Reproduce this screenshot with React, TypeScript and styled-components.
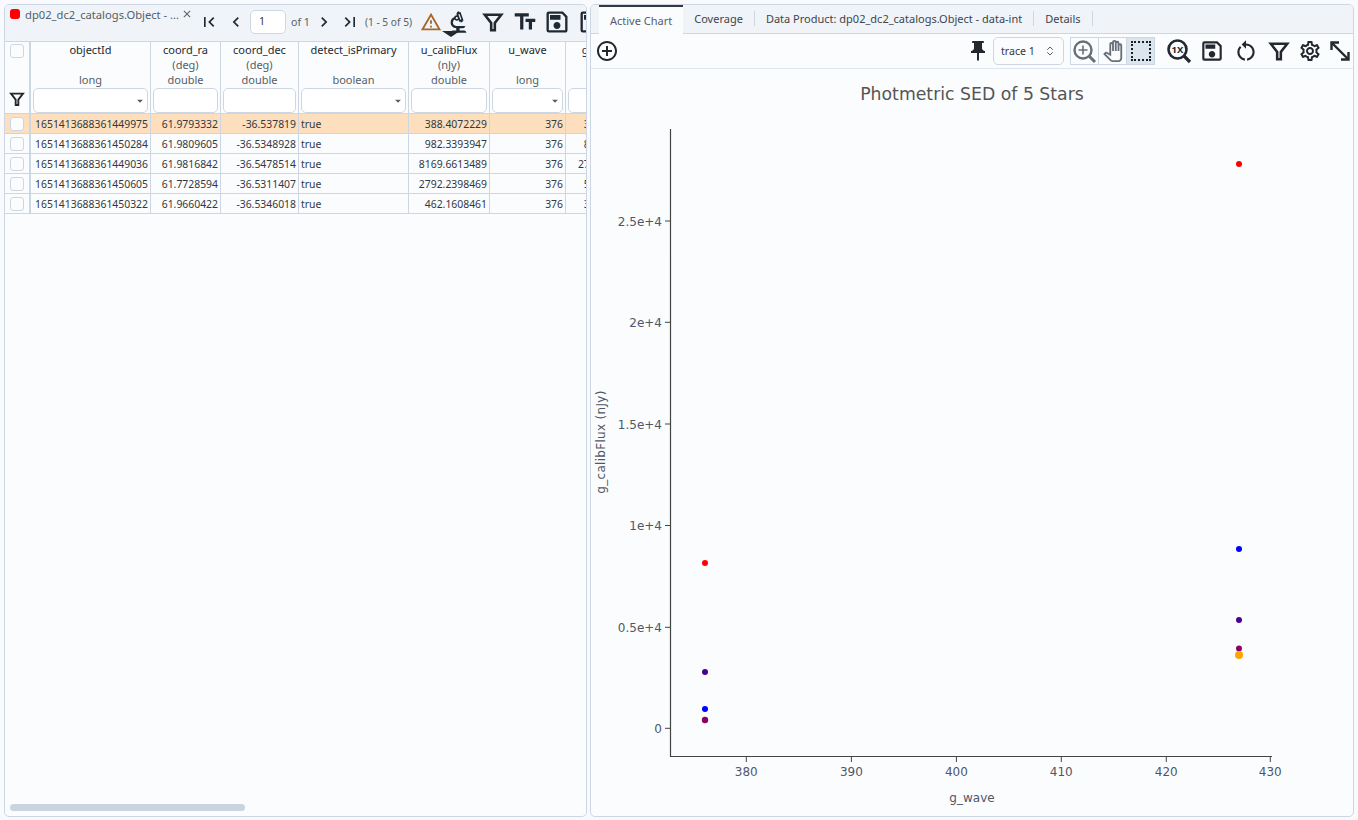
import React from "react"
import styled, { createGlobalStyle } from "styled-components"
import {
  MdFirstPage,
  MdLastPage,
  MdChevronLeft,
  MdChevronRight,
  MdOutlineWarningAmber,
  MdOutlineBiotech,
  MdTextFields,
  MdOutlineSave,
  MdClose,
  MdArrowDropDown,
  MdOutlineAddCircleOutline,
  MdPushPin,
  MdOutlinePanTool,
  MdRestartAlt,
  MdOutlineSettings,
} from "react-icons/md"
import { LuChevronsUpDown } from "react-icons/lu"

const GlobalStyle = createGlobalStyle`
  html, body {
    margin: 0;
    padding: 0;
    background: #f8fafd;
    font-family: "Noto Sans", "Liberation Sans", sans-serif;
  }
`

const Page = styled.div`
  display: flex;
  gap: 3px;
  height: 820px;
  box-sizing: border-box;
  padding: 4px 4px 3px 4px;
  overflow: hidden;
`

const Panel = styled.section<{ $width: number }>`
  width: ${(p) => p.$width}px;
  flex: none;
  box-sizing: border-box;
  display: flex;
  flex-direction: column;
  background: #fbfcfe;
  border: 1px solid #cdd7e4;
  border-radius: 5px;
  overflow: hidden;
`

const TableBar = styled.div`
  height: 36px;
  flex: none;
  display: flex;
  align-items: flex-start;
  background: #f0f4f8;
  border-bottom: 1px solid #cdd7e4;
  white-space: nowrap;
  overflow: hidden;
`

const TableTab = styled.div`
  display: flex;
  align-items: center;
  height: 18px;
  padding: 0 0 0 5px;
  width: 188px;
  flex: none;
  font-size: 11.2px;
  color: #555e68;
`

const RedDot = styled.span`
  width: 10px;
  height: 10px;
  margin-right: 5px;
  border-radius: 3px;
  background: #f00;
  flex: none;
`

const TabClose = styled(MdClose)`
  margin-left: 2px;
  font-size: 12px;
  color: #555e68;
  flex: none;
`

const Pager = styled.div`
  display: flex;
  align-items: center;
  height: 34px;
  font-size: 10.6px;
  color: #555e68;
`

const PageIcon = styled.span<{ $gap?: number; $size?: number; $color?: string }>`
  display: inline-flex;
  position: relative;
  flex: none;
  margin-left: ${(p) => p.$gap ?? 0}px;
  font-size: ${(p) => p.$size ?? 20}px;
  color: ${(p) => p.$color ?? "#1f2933"};
`

const PagerLabel = styled.span<{ $gap: number; $size?: number }>`
  margin-left: ${(p) => p.$gap}px;
  font-size: ${(p) => p.$size ?? 10.6}px;
`

const DropMark = styled.span`
  position: absolute;
  left: -3px;
  top: 22px;
  width: 0;
  height: 0;
  border-left: 9px solid transparent;
  border-right: 9px solid transparent;
  border-top: 6px solid #25292e;
`

const PageInput = styled.div`
  width: 36px;
  height: 24px;
  margin-left: 4px;
  box-sizing: border-box;
  padding: 3px 0 0 8px;
  background: #fff;
  border: 1px solid #cdd7e4;
  border-radius: 5px;
  font-size: 10.6px;
  color: #32383e;
`

const Table = styled.div`
  display: flex;
  flex-direction: column;
  flex: 1;
  overflow: hidden;
`

const COLUMNS = "26px 120px 70px 78px 110px 81px 76px 89px"

const HeadRow = styled.div`
  display: grid;
  grid-template-columns: ${COLUMNS};
  width: 650px;
  height: 72px;
  flex: none;
  background: #fbfcfe;
  border-bottom: 1px solid #cdd7e4;
  box-sizing: border-box;
`

const HeadCell = styled.div`
  display: flex;
  flex-direction: column;
  align-items: center;
  box-sizing: border-box;
  border-right: 1px solid #cdd7e4;
  font-size: 11px;
  line-height: 15px;
  color: #555e68;
`

const CheckHead = styled.div`
  display: flex;
  flex-direction: column;
  align-items: center;
  justify-content: space-between;
  box-sizing: border-box;
  border-right: 2px solid #cdd7e4;
  padding: 2px 0 6px;
`

const ColName = styled.span`
  height: 15px;
  color: #24292f;
`

const ColUnit = styled.span`
  height: 15px;
`

const ColType = styled.span`
  height: 16px;
`

const FilterBox = styled.div`
  position: relative;
  box-sizing: border-box;
  width: calc(100% - 4px);
  height: 25px;
  background: #fff;
  border: 1px solid #cdd7e4;
  border-radius: 5px;
  display: flex;
  align-items: center;
  justify-content: flex-end;
  font-size: 14px;
  color: #555e68;
`

const Row = styled.div<{ $selected?: boolean }>`
  display: grid;
  grid-template-columns: ${COLUMNS};
  width: 650px;
  height: 20px;
  flex: none;
  box-sizing: border-box;
  border-bottom: 1px solid #cdd7e4;
  background: ${(p) => (p.$selected ? "#fddfbd" : "transparent")};
`

const Cell = styled.div<{ $align?: string }>`
  box-sizing: border-box;
  border-right: 1px solid #cdd7e4;
  padding: 0 2px;
  font-size: 10.4px;
  line-height: 20px;
  color: #32383e;
  text-align: ${(p) => p.$align ?? "right"};
  white-space: nowrap;
  overflow: hidden;
`

const CheckCell = styled.div`
  display: flex;
  align-items: center;
  justify-content: center;
  box-sizing: border-box;
  border-right: 2px solid #cdd7e4;
`

const CheckBox = styled.span`
  display: block;
  width: 14px;
  height: 14px;
  box-sizing: border-box;
  background: #fbfcfe;
  border: 1px solid #cdd7e4;
  border-radius: 3px;
`

const Scroller = styled.div`
  margin: auto 0 5px 5px;
  width: 235px;
  height: 7px;
  flex: none;
  border-radius: 4px;
  background: #cad4df;
`

const ChartTabs = styled.div`
  display: flex;
  height: 29px;
  flex: none;
  box-sizing: border-box;
  padding-left: 8px;
  background: #f0f4f8;
  border-bottom: 1px solid #cdd7e4;
  font-size: 11px;
  color: #32383e;
`

const ChartTab = styled.div<{ $active?: boolean }>`
  display: flex;
  align-items: center;
  height: ${(p) => (p.$active ? 29 : 27)}px;
  box-sizing: border-box;
  padding: 0 11px;
  background: ${(p) => (p.$active ? "#fbfcfe" : "transparent")};
  border-top: ${(p) => (p.$active ? "2px solid #32383e" : "none")};
  color: ${(p) => (p.$active ? "#555e68" : "#3d444b")};
`

const TabDivider = styled.span`
  width: 1px;
  height: 15px;
  margin-top: 6px;
  background: #cdd7e4;
  flex: none;
`

const ChartToolbar = styled.div`
  display: flex;
  align-items: center;
  height: 35px;
  flex: none;
  box-sizing: border-box;
  padding: 0 1px 0 4px;
  border-bottom: 1px solid #dde5ee;
`

const ToolIcon = styled.span<{ $gap?: number; $size?: number; $color?: string }>`
  display: inline-flex;
  flex: none;
  margin-left: ${(p) => p.$gap ?? 0}px;
  font-size: ${(p) => p.$size ?? 24}px;
  color: ${(p) => p.$color ?? "#23282e"};
`

const TraceSelect = styled.div`
  display: flex;
  align-items: center;
  justify-content: space-between;
  box-sizing: border-box;
  width: 71px;
  height: 28px;
  margin-left: 3px;
  padding: 0 7px 0 7px;
  background: #fbfcfe;
  border: 1px solid #cdd7e4;
  border-radius: 5px;
  font-size: 10.6px;
  color: #32383e;
`

const ToolGroup = styled.div`
  display: flex;
  margin-left: 6px;
  box-sizing: border-box;
  height: 28px;
  border: 1px solid #cdd7e4;
`

const GroupButton = styled.div<{ $active?: boolean }>`
  display: flex;
  align-items: center;
  justify-content: center;
  width: 27px;
  font-size: 22px;
  color: #676f78;
  border-left: 1px solid #cdd7e4;
  background: ${(p) => (p.$active ? "#dbe5ed" : "transparent")};
  &:first-child {
    border-left: none;
  }
`

const DashedBox = styled.span`
  display: block;
  width: 20px;
  height: 20px;
  box-sizing: border-box;
  border: 2px dotted #1c2026;
`

const ChartCanvas = styled.svg`
  display: block;
  flex: 1;
  width: 100%;
  min-height: 0;
`

const Spacer = styled.span`
  flex: 1;
`

const AxisText = styled.text`
  font-family: "DejaVu Sans", Verdana, sans-serif;
  font-size: 12px;
  fill: #4f5766;
`

const YAxisTitle = styled(AxisText)`
  letter-spacing: 0.3px;
`

const ChartTitle = styled.text`
  font-family: "DejaVu Sans", Verdana, sans-serif;
  font-size: 17.3px;
  fill: #555;
`

const Zoom1x: React.FC = () => (
  <svg width="26" height="26" viewBox="0 0 26 26">
    <circle cx="11.5" cy="11.5" r="9" fill="none" stroke="#23282e" strokeWidth="2.6" />
    <line x1="18" y1="18" x2="24" y2="24" stroke="#23282e" strokeWidth="3.2" />
    <text x="11.5" y="15" fontSize="9.5" fontWeight="700" textAnchor="middle" fill="#23282e" fontFamily="Noto Sans, sans-serif">
      1X
    </text>
  </svg>
)

const ZoomPlus: React.FC = () => (
  <svg width="25" height="25" viewBox="0 0 25 25" fill="none" stroke="#676f78">
    <circle cx="11" cy="11" r="8.5" strokeWidth="2.4" />
    <path d="M11 6.5 V15.5 M6.5 11 H15.5" strokeWidth="1.6" />
    <path d="M17 17 L23 23" strokeWidth="3" />
  </svg>
)

const ExpandArrows: React.FC = () => (
  <svg width="24" height="24" viewBox="0 0 24 24" fill="none" stroke="#23282e" strokeWidth="2.4">
    <path d="M4 4 L20 20" />
    <path d="M3.5 11 V3.5 H11" />
    <path d="M13 20.5 H20.5 V13" />
  </svg>
)

const FunnelOutline: React.FC<{ size: number }> = ({ size }) => (
  <svg width={size} height={size} viewBox="0 0 24 24" fill="none" stroke="#23282e" strokeWidth="2.8" strokeLinejoin="miter">
    <path d="M3 4 H21 L14 13 V21 H10 V13 Z" />
  </svg>
)

const columns = [
  { name: "objectId", unit: "", type: "long", filter: "select" },
  { name: "coord_ra", unit: "(deg)", type: "double", filter: "text" },
  { name: "coord_dec", unit: "(deg)", type: "double", filter: "text" },
  { name: "detect_isPrimary", unit: "", type: "boolean", filter: "select" },
  { name: "u_calibFlux", unit: "(nJy)", type: "double", filter: "text" },
  { name: "u_wave", unit: "", type: "long", filter: "select" },
  { name: "g_calibFlux", unit: "(nJy)", type: "double", filter: "text" },
]

const rows = [
  ["1651413688361449975", "61.9793332", "-36.537819", "true", "388.4072229", "376", "3650.4872013"],
  ["1651413688361450284", "61.9809605", "-36.5348928", "true", "982.3393947", "376", "8843.1250934"],
  ["1651413688361449036", "61.9816842", "-36.5478514", "true", "8169.6613489", "376", "27841.6620175"],
  ["1651413688361450605", "61.7728594", "-36.5311407", "true", "2792.2398469", "376", "5352.9017736"],
  ["1651413688361450322", "61.9660422", "-36.5346018", "true", "462.1608461", "376", "3950.2264108"],
]

const xTicks = [
  { label: "380", x: 746.3 },
  { label: "390", x: 851.4 },
  { label: "400", x: 956.4 },
  { label: "410", x: 1061.3 },
  { label: "420", x: 1166.3 },
  { label: "430", x: 1270.3 },
]

const yTicks = [
  { label: "0", y: 728.3 },
  { label: "0.5e+4", y: 627.3 },
  { label: "1e+4", y: 525.5 },
  { label: "1.5e+4", y: 424 },
  { label: "2e+4", y: 322.3 },
  { label: "2.5e+4", y: 221 },
]

const points = [
  { x: 705, y: 720, c: "#ffa500", r: 3 },
  { x: 705, y: 720, c: "#8a0068", r: 3.2 },
  { x: 705, y: 709, c: "#0000ff", r: 3 },
  { x: 705, y: 672, c: "#4b0094", r: 3 },
  { x: 705, y: 563, c: "#ff0000", r: 3 },
  { x: 1239, y: 164, c: "#ff0000", r: 3 },
  { x: 1239, y: 549, c: "#0000ff", r: 3 },
  { x: 1239, y: 620, c: "#4b0094", r: 3 },
  { x: 1239, y: 648.5, c: "#8a0068", r: 3 },
  { x: 1239, y: 655, c: "#ffa500", r: 4 },
]

const App: React.FC = () => {
  return (
    <>
      <GlobalStyle />
      <Page>
        <Panel $width={583}>
          <TableBar>
            <TableTab>
              <RedDot />
              <span>dp02_dc2_catalogs.Object - ...</span>
              <TabClose />
            </TableTab>
            <Pager>
              <PageIcon $gap={1}><MdFirstPage /></PageIcon>
              <PageIcon $gap={7}><MdChevronLeft /></PageIcon>
              <PageInput>1</PageInput>
              <PagerLabel $gap={5}>of 1</PagerLabel>
              <PageIcon $gap={4}><MdChevronRight /></PageIcon>
              <PageIcon $gap={6}><MdLastPage /></PageIcon>
              <PagerLabel $gap={5} $size={10.2}>(1 - 5 of 5)</PagerLabel>
              <PageIcon $gap={8} $size={22} $color="#a5682a"><MdOutlineWarningAmber /></PageIcon>
              <PageIcon $gap={3} $size={27}>
                <MdOutlineBiotech />
                <DropMark />
              </PageIcon>
              <PageIcon $gap={10} $size={22}><FunnelOutline size={22} /></PageIcon>
              <PageIcon $gap={8} $size={26}><MdTextFields /></PageIcon>
              <PageIcon $gap={5} $size={28}><MdOutlineSave /></PageIcon>
              <PageIcon $gap={6} $size={28}><MdOutlineSave /></PageIcon>
            </Pager>
          </TableBar>
          <Table>
            <HeadRow>
              <CheckHead>
                <CheckBox />
                <FunnelOutline size={16} />
              </CheckHead>
              {columns.map((col) => (
                <HeadCell key={col.name}>
                  <ColName>{col.name}</ColName>
                  <ColUnit>{col.unit}</ColUnit>
                  <ColType>{col.type}</ColType>
                  <FilterBox>{col.filter === "select" && <MdArrowDropDown />}</FilterBox>
                </HeadCell>
              ))}
            </HeadRow>
            {rows.map((row, i) => (
              <Row key={row[0]} $selected={i === 0}>
                <CheckCell>
                  <CheckBox />
                </CheckCell>
                {row.map((value, j) => (
                  <Cell key={j} $align={j === 3 ? "left" : "right"}>
                    {value}
                  </Cell>
                ))}
              </Row>
            ))}
            <Scroller />
          </Table>
        </Panel>

        <Panel $width={764}>
          <ChartTabs>
            <ChartTab $active>Active Chart</ChartTab>
            <ChartTab>Coverage</ChartTab>
            <TabDivider />
            <ChartTab>Data Product: dp02_dc2_catalogs.Object - data-int</ChartTab>
            <TabDivider />
            <ChartTab>Details</ChartTab>
            <TabDivider />
          </ChartTabs>
          <ChartToolbar>
            <ToolIcon><MdOutlineAddCircleOutline /></ToolIcon>
            <Spacer />
            <ToolIcon $size={24}><MdPushPin /></ToolIcon>
            <TraceSelect>
              <span>trace 1</span>
              <LuChevronsUpDown size={12} color="#555e68" />
            </TraceSelect>
            <ToolGroup>
              <GroupButton><ZoomPlus /></GroupButton>
              <GroupButton><MdOutlinePanTool /></GroupButton>
              <GroupButton $active><DashedBox /></GroupButton>
            </ToolGroup>
            <ToolIcon $gap={11} $size={26}><Zoom1x /></ToolIcon>
            <ToolIcon $gap={7} $size={26}><MdOutlineSave /></ToolIcon>
            <ToolIcon $gap={8} $size={26}><MdRestartAlt /></ToolIcon>
            <ToolIcon $gap={9} $size={24}><FunnelOutline size={22} /></ToolIcon>
            <ToolIcon $gap={8} $size={24}><MdOutlineSettings /></ToolIcon>
            <ToolIcon $gap={6} $size={24}><ExpandArrows /></ToolIcon>
          </ChartToolbar>
          <ChartCanvas viewBox="591 69 762 747" preserveAspectRatio="xMinYMin">
            <ChartTitle x="972" y="100" textAnchor="middle">Photmetric SED of 5 Stars</ChartTitle>
            <path d="M670.5 129 V756.5 H1272" fill="none" stroke="#444" strokeWidth="1.2" />
            {yTicks.map((t) => (
              <g key={t.label}>
                <line x1="665" x2="670" y1={t.y} y2={t.y} stroke="#444" />
                <AxisText x="662" y={t.y + 4.5} textAnchor="end">{t.label}</AxisText>
              </g>
            ))}
            {xTicks.map((t) => (
              <g key={t.label}>
                <line x1={t.x} x2={t.x} y1="757" y2="762" stroke="#444" />
                <AxisText x={t.x} y="776" textAnchor="middle">{t.label}</AxisText>
              </g>
            ))}
            <AxisText x="972" y="802" textAnchor="middle">g_wave</AxisText>
            <YAxisTitle x="605" y="442" textAnchor="middle" transform="rotate(-90 605 442)">g_calibFlux (nJy)</YAxisTitle>
            {points.map((p, i) => (
              <circle key={i} cx={p.x} cy={p.y} r={p.r} fill={p.c} />
            ))}
          </ChartCanvas>
        </Panel>
      </Page>
    </>
  )
}

export default App
